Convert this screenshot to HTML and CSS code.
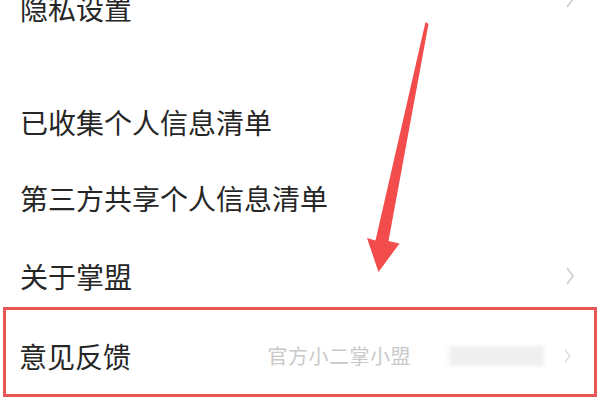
FILE: index.html
```html
<!DOCTYPE html>
<html lang="zh-CN">
<head>
<meta charset="utf-8">
<link rel="stylesheet" href="styles.css">
</head>
<body>
<div class="page">
  <div class="list">
    <div class="row row-top">
      <span class="label">隐私设置</span>
      <svg class="chev" width="12" height="18" viewBox="0 0 12 18"><path d="M3 1 L9 9 L3 17" fill="none" stroke="#c6c6c6" stroke-width="1.3"/></svg>
    </div>
    <div class="row row-std first">
      <span class="label">已收集个人信息清单</span>
    </div>
    <div class="row row-std">
      <span class="label">第三方共享个人信息清单</span>
    </div>
    <div class="row row-about">
      <span class="label">关于掌盟</span>
      <svg class="chev" width="12" height="18" viewBox="0 0 12 18"><path d="M3 1 L9 9 L3 17" fill="none" stroke="#c6c6c6" stroke-width="1.3"/></svg>
    </div>
    <div class="row row-feedback">
      <span class="label">意见反馈</span>
      <div class="extra">
        <span class="hint">官方小二掌小盟</span>
        <span class="blur"></span>
        <svg class="chev faint" width="12" height="18" viewBox="0 0 12 18"><path d="M3 3 L8 9 L3 15" fill="none" stroke="#dcdcdc" stroke-width="1.3"/></svg>
      </div>
    </div>
  </div>
  <svg class="arrow" width="600" height="400" viewBox="0 0 600 400">
    <polygon points="425.5,22 428.5,24 388.5,241 399.5,243.5 378.5,272 367,238 375.5,240.5" fill="#f24c4c"/>
  </svg>
</div>
</body>
</html>
```

FILE: styles.css
```css
html, body {
  margin: 0;
  padding: 0;
  background: #ffffff;
}

.page {
  position: relative;
  width: 600px;
  height: 400px;
  overflow: hidden;
  font-family: "Noto Sans CJK SC", "Noto Sans", sans-serif;
}

.list {
  display: flex;
  flex-direction: column;
  margin-top: -20px;
}

.row {
  display: flex;
  align-items: center;
  justify-content: space-between;
  box-sizing: border-box;
  padding: 0 24px 0 20px;
}

.label {
  font-size: 28px;
  color: #262626;
  line-height: 1;
}

.row-top {
  height: 56px;
}

.row-top .chev {
  margin-top: -18px;
}

.row-std {
  height: 76px;
}

.row-std.first {
  margin-top: 48px;
}

.row-about {
  height: 71px;
  padding-top: 9px;
}

.row-feedback {
  height: 90px;
  margin: 0 3px;
  border: 3.5px solid #ec5454;
  padding: 7px 20px 0 13px;
}

.extra {
  display: flex;
  align-items: center;
}

.hint {
  font-size: 20px;
  color: #c9c9c9;
  letter-spacing: 0.5px;
}

.blur {
  display: block;
  width: 95px;
  height: 20px;
  margin-left: 38px;
  background: #ececec;
  filter: blur(2px);
  opacity: 0.8;
}

.chev.faint {
  margin-left: 18px;
}

.arrow {
  position: absolute;
  left: 0;
  top: 0;
}
```
